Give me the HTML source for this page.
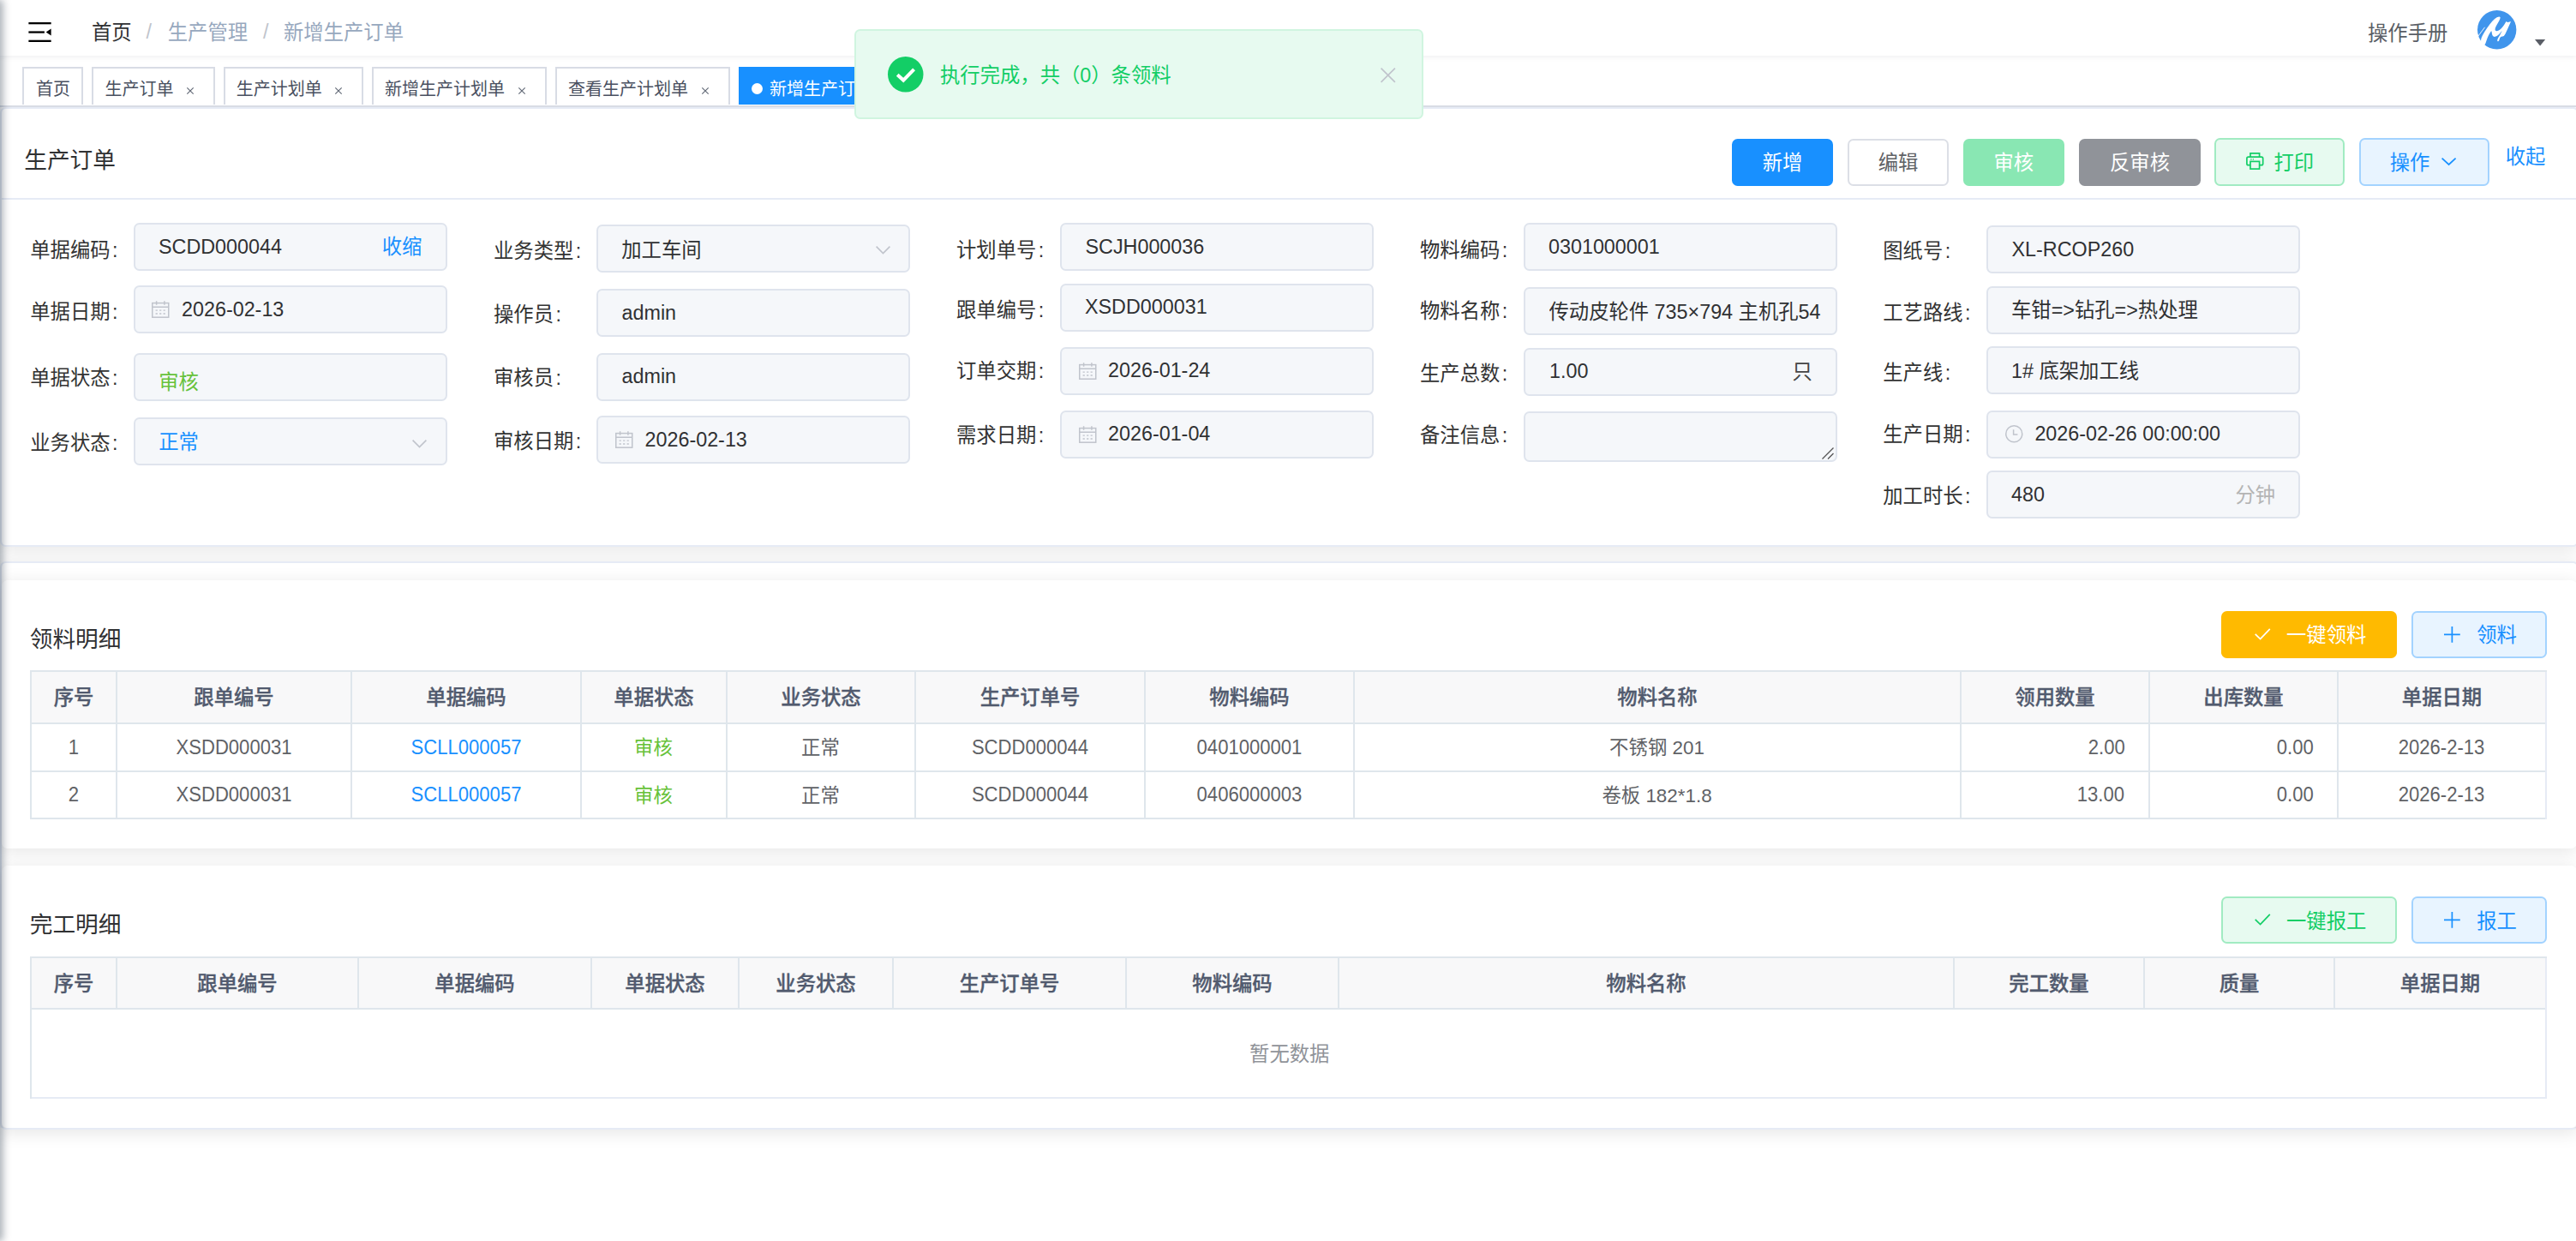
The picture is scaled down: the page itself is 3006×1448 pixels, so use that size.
<!DOCTYPE html>
<html lang="zh-CN"><head><meta charset="utf-8"><title>新增生产订单</title>
<style>
html,body{margin:0;padding:0}
body{width:3006px;height:1448px;position:relative;overflow:hidden;background:#fff;font-family:"Liberation Sans","Noto Sans CJK SC",sans-serif;color:#303133}
.t{position:absolute;white-space:nowrap}
.b{position:absolute;box-sizing:border-box}
.card{background:#fff;border:2px solid #e6ebf5;border-radius:6.67px;box-shadow:0 3.33px 20px rgba(0,0,0,.1)}
.icard{background:#fff;box-shadow:0 3.33px 20px rgba(0,0,0,.1);border-radius:6.67px}
.inp{background:#f5f7fa;border:2px solid #dfe4ed;border-radius:6.67px}
.btn{border-radius:6.67px}
.tag{border:2px solid #d8dce5;background:#fff}
svg{position:absolute;overflow:visible}
table{border-collapse:collapse}
</style></head><body>

<div class="b " style="left:0.00px;top:0.00px;width:3006.00px;height:65.00px;background:#fff;box-shadow:0 1.67px 6.67px rgba(0,21,41,.08);z-index:3"></div>
<div class="b" style="left:0;top:0;width:3006px;height:65px;z-index:4">
<svg style="left:32.75px;top:26px" width="27" height="23" viewBox="0 0 26.25 23"><rect x="0" y="0" width="26.25" height="2.3" fill="#000"/><rect x="0" y="10.4" width="18.5" height="2.3" fill="#000"/><rect x="0" y="20.7" width="26.25" height="2.3" fill="#000"/><path d="M20.3 11.6 L26.25 7.6 L26.25 15.6 Z" fill="#000"/></svg>
<div class="t " style="top:20.80px;font-size:23.33px;line-height:34.99px;color:#303133;left:107.00px;">首页</div>
<div class="t " style="top:19.80px;font-size:23.33px;line-height:34.99px;color:#c0c4cc;left:170.50px;font-family:'Liberation Sans',sans-serif;">/</div>
<div class="t " style="top:20.80px;font-size:23.33px;line-height:34.99px;color:#97a8be;left:195.75px;">生产管理</div>
<div class="t " style="top:19.80px;font-size:23.33px;line-height:34.99px;color:#c0c4cc;left:307.00px;">/</div>
<div class="t " style="top:20.80px;font-size:23.33px;line-height:34.99px;color:#97a8be;left:331.00px;">新增生产订单</div>
<div class="t " style="top:21.50px;font-size:23.33px;line-height:34.99px;color:#5a5e66;left:2763.00px;">操作手册</div>
<svg style="left:2890.7px;top:11.5px" width="45.4" height="45.4" viewBox="0 0 45.4 45.4"><circle cx="22.7" cy="22.7" r="22.7" fill="#4095ec"/><path d="M5.98 41.48 Q5.25 41.84 4.29 37.98 Q3.32 34.11 5.98 29.27 Q8.64 24.44 11.54 20.33 Q14.44 16.22 17.34 12.84 Q20.24 9.45 22.66 8.37 Q25.07 7.28 26.16 7.64 Q27.25 8.00 26.16 10.42 Q25.07 12.84 23.62 15.25 Q22.17 17.67 21.33 19.60 Q20.48 21.54 20.60 22.87 Q20.72 24.20 22.41 24.32 Q24.11 24.44 26.04 22.87 Q27.97 21.30 29.67 19.00 Q31.36 16.70 32.20 15.25 Q33.05 13.80 33.53 13.20 Q34.02 12.60 34.50 13.44 Q34.98 14.29 36.31 13.80 Q37.64 13.32 38.49 12.96 Q39.33 12.60 38.01 15.62 Q36.68 18.64 35.23 21.78 Q33.78 24.92 32.57 27.58 Q31.36 30.24 29.42 30.48 Q27.49 30.72 26.77 31.45 Q26.04 32.17 25.68 33.87 Q25.32 35.56 24.59 36.04 Q23.86 36.52 23.38 36.04 Q22.90 35.56 23.50 33.87 Q24.11 32.17 25.07 30.72 Q26.04 29.27 27.73 25.89 Q29.42 22.51 27.73 24.92 Q26.04 27.34 24.11 28.91 Q22.17 30.48 20.48 30.84 Q18.79 31.21 17.82 29.76 Q16.86 28.31 16.73 25.89 Q16.61 23.47 15.53 24.92 Q14.44 26.37 12.99 29.27 Q11.54 32.17 10.57 35.32 Q9.60 38.46 9.12 39.18 Q8.64 39.91 7.67 40.51 Q6.70 41.12 5.98 41.48 Z" fill="#fff"/><path d="M0.4 30.7 L8.6 19.8" stroke="#fff" stroke-width="0.9" fill="none"/></svg>
<svg style="left:2958.1px;top:46px" width="12.2" height="7.5" viewBox="0 0 12.2 7.5"><path d="M0 0 H12.2 L6.1 7.5 Z" fill="#5a5e66"/></svg>
</div>
<div class="b" style="left:0;top:65px;width:3006px;height:60px;background:#fff;border-bottom:2px solid #d8dce5;overflow:hidden;z-index:2">
<div class="b tag" style="left:26px;top:13px;width:71px;height:44px;border-bottom:none"></div>
<div class="b tag" style="left:107px;top:13px;width:144px;height:44px;border-bottom:none"></div>
<div class="b tag" style="left:261px;top:13px;width:163px;height:44px;border-bottom:none"></div>
<div class="b tag" style="left:434px;top:13px;width:204px;height:44px;border-bottom:none"></div>
<div class="b tag" style="left:648px;top:13px;width:204px;height:44px;border-bottom:none"></div>
<div class="b" style="left:862px;top:13px;width:194px;height:44px;background:#1890ff"></div>
</div>
<div class="b" style="left:0;top:65px;width:3006px;height:58px;z-index:2;overflow:hidden">
<div class="t " style="top:24.36px;font-size:20px;line-height:30.0px;color:#495060;left:42.00px;">首页</div>
<div class="t " style="top:24.36px;font-size:20px;line-height:30.0px;color:#495060;left:122.50px;">生产订单</div>
<svg style="left:218.25px;top:36.75px" width="8" height="8" viewBox="0 0 8 8"><path d="M0.3 0.3 L7.7 7.7 M7.7 0.3 L0.3 7.7" stroke="#646b78" stroke-width="1.2" fill="none"/></svg>
<div class="t " style="top:24.36px;font-size:20px;line-height:30.0px;color:#495060;left:275.75px;">生产计划单</div>
<svg style="left:391.25px;top:36.75px" width="8" height="8" viewBox="0 0 8 8"><path d="M0.3 0.3 L7.7 7.7 M7.7 0.3 L0.3 7.7" stroke="#646b78" stroke-width="1.2" fill="none"/></svg>
<div class="t " style="top:24.36px;font-size:20px;line-height:30.0px;color:#495060;left:449.00px;">新增生产计划单</div>
<svg style="left:605px;top:36.75px" width="8" height="8" viewBox="0 0 8 8"><path d="M0.3 0.3 L7.7 7.7 M7.7 0.3 L0.3 7.7" stroke="#646b78" stroke-width="1.2" fill="none"/></svg>
<div class="t " style="top:24.36px;font-size:20px;line-height:30.0px;color:#495060;left:663.00px;">查看生产计划单</div>
<svg style="left:819.2px;top:36.75px" width="8" height="8" viewBox="0 0 8 8"><path d="M0.3 0.3 L7.7 7.7 M7.7 0.3 L0.3 7.7" stroke="#646b78" stroke-width="1.2" fill="none"/></svg>
<div class="b" style="left:876.75px;top:31.6px;width:13.3px;height:13.3px;border-radius:50%;background:#fff"></div>
<div class="t " style="top:24.36px;font-size:20px;line-height:30.0px;color:#fff;left:898.00px;">新增生产订单</div>
<svg style="left:1033px;top:36.75px" width="8" height="8" viewBox="0 0 8 8"><path d="M0.3 0.3 L7.7 7.7 M7.7 0.3 L0.3 7.7" stroke="#fff" stroke-width="1.2" fill="none"/></svg>
</div>
<div class="b " style="left:997.00px;top:34.30px;width:664.00px;height:105.00px;background:#e7faf0;border:2px solid #d0f5e0;border-radius:6.67px;z-index:10"></div>
<svg style="left:1035.5px;top:66.25px;z-index:11" width="41.5" height="41.5" viewBox="0 0 41.5 41.5"><circle cx="20.75" cy="20.75" r="20.75" fill="#13ce66"/><path d="M11.2 21.3 L18.2 27.6 L30.6 14.8" stroke="#fff" stroke-width="4" fill="none"/></svg>
<div class="t " style="top:70.90px;font-size:23.33px;line-height:34.99px;color:#13ce66;left:1097.00px;z-index:11;">执行完成，共（0）条领料</div>
<svg style="left:1610.5px;top:78.5px;z-index:11" width="17.5" height="17.5" viewBox="0 0 17.5 17.5"><path d="M0.6 0.6 L16.9 16.9 M16.9 0.6 L0.6 16.9" stroke="#c0c4cc" stroke-width="1.7" fill="none"/></svg>
<div class="b card" style="left:0.00px;top:125.00px;width:3009.00px;height:513.00px;"></div>
<div class="t " style="top:166.98px;font-size:26.67px;line-height:40.01px;color:#303133;left:28.25px;">生产订单</div>
<div class="b " style="left:0.00px;top:231.00px;width:3006.00px;height:2.00px;background:#e6ebf5"></div>
<div class="b btn" style="left:2021.00px;top:162.00px;width:118.00px;height:55.00px;background:#1890ff"></div>
<div class="t " style="top:173.31px;font-size:23.33px;line-height:34.99px;color:#fff;left:1680.00px;width:800px;text-align:center;">新增</div>
<div class="b btn" style="left:2156.00px;top:162.00px;width:118.00px;height:55.00px;background:#fff;border:2px solid #dcdfe6"></div>
<div class="t " style="top:173.31px;font-size:23.33px;line-height:34.99px;color:#606266;left:1815.00px;width:800px;text-align:center;">编辑</div>
<div class="b btn" style="left:2291.00px;top:162.00px;width:118.00px;height:55.00px;background:#89e7b3"></div>
<div class="t " style="top:173.31px;font-size:23.33px;line-height:34.99px;color:#fff;left:1949.75px;width:800px;text-align:center;">审核</div>
<div class="b btn" style="left:2426.00px;top:162.00px;width:142.00px;height:55.00px;background:#909399"></div>
<div class="t " style="top:173.31px;font-size:23.33px;line-height:34.99px;color:#fff;left:2097.00px;width:800px;text-align:center;">反审核</div>
<div class="b btn" style="left:2584.00px;top:161.00px;width:152.00px;height:56.00px;background:#e7faf0;border:2px solid #a1ebc2"></div>
<div class="t " style="top:172.50px;font-size:23.33px;line-height:34.99px;color:#13ce66;left:2653.50px;">打印</div>
<svg style="left:2621.1px;top:178.4px" width="20.6" height="20" viewBox="0 0 20.6 20" fill="none" stroke="#13ce66" stroke-width="1.7"><path d="M5 5.2 V0.9 H15.6 V5.2"/><path d="M5 14.6 H2.6 Q0.9 14.6 0.9 12.9 V7 Q0.9 5.2 2.6 5.2 H18 Q19.7 5.2 19.7 7 V12.9 Q19.7 14.6 18 14.6 H15.6"/><rect x="5" y="10.4" width="10.6" height="8.7"/><path d="M5.2 7.9 H6.6 M7.8 7.9 H9" stroke-width="1.4"/></svg>
<div class="b btn" style="left:2753.00px;top:161.00px;width:152.00px;height:56.00px;background:#e8f4ff;border:2px solid #a3d3ff"></div>
<div class="t " style="top:172.50px;font-size:23.33px;line-height:34.99px;color:#1890ff;left:2788.70px;">操作</div>
<svg style="left:2848.8px;top:184.1px" width="17.2" height="8.7" viewBox="0 0 17.2 8.7"><path d="M0.6 0.6 L8.6 8 L16.6 0.6" stroke="#1890ff" stroke-width="1.7" fill="none"/></svg>
<div class="t " style="top:166.41px;font-size:23.33px;line-height:34.99px;color:#1890ff;left:2923.80px;">收起</div>
<div class="b inp" style="left:156.00px;top:260.00px;width:366.00px;height:56.00px;"></div>
<div class="t " style="top:275.06px;font-size:23.33px;line-height:34.99px;color:#333;left:35.25px;">单据编码<span style="margin-left:2.5px">:</span></div>
<div class="t " style="top:271.00px;font-size:23.33px;line-height:34.99px;color:#303133;left:185.00px;">SCDD000044</div>
<div class="t " style="top:271.31px;font-size:23.33px;line-height:34.99px;color:#1890ff;left:445.75px;">收缩</div>
<div class="b inp" style="left:156.00px;top:333.00px;width:366.00px;height:56.00px;"></div>
<div class="t " style="top:346.81px;font-size:23.33px;line-height:34.99px;color:#333;left:35.25px;">单据日期<span style="margin-left:2.5px">:</span></div>
<svg style="left:177px;top:351.3px" width="20.5" height="20" viewBox="0 0 20.5 20" fill="none" stroke="#c0c4cc" stroke-width="1.5"><rect x="0.75" y="2.6" width="19" height="16.6"/><path d="M0.75 7.3 H19.75 M5.6 0.3 V4.8 M14.9 0.3 V4.8"/><path d="M4.6 11.2 H6.8 M9.1 11.2 H11.3 M13.6 11.2 H15.8 M4.6 15 H6.8 M9.1 15 H11.3 M13.6 15 H15.8" stroke-width="1.3"/></svg>
<div class="t " style="top:344.11px;font-size:23.33px;line-height:34.99px;color:#303133;left:212.00px;">2026-02-13</div>
<div class="b inp" style="left:156.00px;top:412.00px;width:366.00px;height:56.00px;"></div>
<div class="t " style="top:423.81px;font-size:23.33px;line-height:34.99px;color:#333;left:35.25px;">单据状态<span style="margin-left:2.5px">:</span></div>
<div class="t " style="top:428.81px;font-size:23.33px;line-height:34.99px;color:#67c23a;left:185.25px;">审核</div>
<div class="b inp" style="left:156.00px;top:487.00px;width:366.00px;height:56.00px;"></div>
<div class="t " style="top:499.80px;font-size:23.33px;line-height:34.99px;color:#333;left:35.25px;">业务状态<span style="margin-left:2.5px">:</span></div>
<div class="t " style="top:499.30px;font-size:23.33px;line-height:34.99px;color:#1890ff;left:185.25px;">正常</div>
<svg style="left:481.25px;top:512.5px" width="17" height="9.5" viewBox="0 0 17 9.5"><path d="M0.6 0.6 L8.5 8.6 L16.4 0.6" stroke="#c0c4cc" stroke-width="1.6" fill="none"/></svg>
<div class="b inp" style="left:696.00px;top:262.00px;width:366.00px;height:56.00px;"></div>
<div class="t " style="top:275.56px;font-size:23.33px;line-height:34.99px;color:#333;left:576.00px;">业务类型<span style="margin-left:2.5px">:</span></div>
<div class="t " style="top:274.81px;font-size:23.33px;line-height:34.99px;color:#303133;left:725.25px;">加工车间</div>
<svg style="left:1021.7px;top:287.3px" width="17" height="9.5" viewBox="0 0 17 9.5"><path d="M0.6 0.6 L8.5 8.6 L16.4 0.6" stroke="#c0c4cc" stroke-width="1.6" fill="none"/></svg>
<div class="b inp" style="left:696.00px;top:337.00px;width:366.00px;height:56.00px;"></div>
<div class="t " style="top:349.56px;font-size:23.33px;line-height:34.99px;color:#333;left:576.00px;">操作员<span style="margin-left:2.5px">:</span></div>
<div class="t " style="top:348.20px;font-size:23.33px;line-height:34.99px;color:#303133;left:725.50px;">admin</div>
<div class="b inp" style="left:696.00px;top:412.00px;width:366.00px;height:56.00px;"></div>
<div class="t " style="top:423.81px;font-size:23.33px;line-height:34.99px;color:#333;left:576.00px;">审核员<span style="margin-left:2.5px">:</span></div>
<div class="t " style="top:422.31px;font-size:23.33px;line-height:34.99px;color:#303133;left:725.50px;">admin</div>
<div class="b inp" style="left:696.00px;top:485.00px;width:366.00px;height:56.00px;"></div>
<div class="t " style="top:497.55px;font-size:23.33px;line-height:34.99px;color:#333;left:576.00px;">审核日期<span style="margin-left:2.5px">:</span></div>
<svg style="left:718px;top:503px" width="20.5" height="20" viewBox="0 0 20.5 20" fill="none" stroke="#c0c4cc" stroke-width="1.5"><rect x="0.75" y="2.6" width="19" height="16.6"/><path d="M0.75 7.3 H19.75 M5.6 0.3 V4.8 M14.9 0.3 V4.8"/><path d="M4.6 11.2 H6.8 M9.1 11.2 H11.3 M13.6 11.2 H15.8 M4.6 15 H6.8 M9.1 15 H11.3 M13.6 15 H15.8" stroke-width="1.3"/></svg>
<div class="t " style="top:495.80px;font-size:23.33px;line-height:34.99px;color:#303133;left:752.50px;">2026-02-13</div>
<div class="b inp" style="left:1237.00px;top:260.00px;width:366.00px;height:56.00px;"></div>
<div class="t " style="top:275.06px;font-size:23.33px;line-height:34.99px;color:#333;left:1116.00px;">计划单号<span style="margin-left:2.5px">:</span></div>
<div class="t " style="top:271.00px;font-size:23.33px;line-height:34.99px;color:#303133;left:1266.50px;">SCJH000036</div>
<div class="b inp" style="left:1237.00px;top:331.00px;width:366.00px;height:56.00px;"></div>
<div class="t " style="top:345.06px;font-size:23.33px;line-height:34.99px;color:#333;left:1116.00px;">跟单编号<span style="margin-left:2.5px">:</span></div>
<div class="t " style="top:341.41px;font-size:23.33px;line-height:34.99px;color:#303133;left:1266.00px;">XSDD000031</div>
<div class="b inp" style="left:1237.00px;top:405.00px;width:366.00px;height:56.00px;"></div>
<div class="t " style="top:416.31px;font-size:23.33px;line-height:34.99px;color:#333;left:1116.00px;">订单交期<span style="margin-left:2.5px">:</span></div>
<svg style="left:1258.5px;top:422.5px" width="20.5" height="20" viewBox="0 0 20.5 20" fill="none" stroke="#c0c4cc" stroke-width="1.5"><rect x="0.75" y="2.6" width="19" height="16.6"/><path d="M0.75 7.3 H19.75 M5.6 0.3 V4.8 M14.9 0.3 V4.8"/><path d="M4.6 11.2 H6.8 M9.1 11.2 H11.3 M13.6 11.2 H15.8 M4.6 15 H6.8 M9.1 15 H11.3 M13.6 15 H15.8" stroke-width="1.3"/></svg>
<div class="t " style="top:415.31px;font-size:23.33px;line-height:34.99px;color:#303133;left:1293.00px;">2026-01-24</div>
<div class="b inp" style="left:1237.00px;top:479.00px;width:366.00px;height:56.00px;"></div>
<div class="t " style="top:490.81px;font-size:23.33px;line-height:34.99px;color:#333;left:1116.00px;">需求日期<span style="margin-left:2.5px">:</span></div>
<svg style="left:1258.5px;top:496.5px" width="20.5" height="20" viewBox="0 0 20.5 20" fill="none" stroke="#c0c4cc" stroke-width="1.5"><rect x="0.75" y="2.6" width="19" height="16.6"/><path d="M0.75 7.3 H19.75 M5.6 0.3 V4.8 M14.9 0.3 V4.8"/><path d="M4.6 11.2 H6.8 M9.1 11.2 H11.3 M13.6 11.2 H15.8 M4.6 15 H6.8 M9.1 15 H11.3 M13.6 15 H15.8" stroke-width="1.3"/></svg>
<div class="t " style="top:489.31px;font-size:23.33px;line-height:34.99px;color:#303133;left:1293.00px;">2026-01-04</div>
<div class="b inp" style="left:1778.00px;top:260.00px;width:366.00px;height:56.00px;"></div>
<div class="t " style="top:274.56px;font-size:23.33px;line-height:34.99px;color:#333;left:1657.00px;">物料编码<span style="margin-left:2.5px">:</span></div>
<div class="t " style="top:271.00px;font-size:23.33px;line-height:34.99px;color:#303133;left:1807.00px;">0301000001</div>
<div class="b inp" style="left:1778.00px;top:335.00px;width:366.00px;height:56.00px;"></div>
<div class="t " style="top:345.56px;font-size:23.33px;line-height:34.99px;color:#333;left:1657.00px;">物料名称<span style="margin-left:2.5px">:</span></div>
<div class="t" style="left:1807.5px;top:346.5px;width:318px;overflow:hidden;font-size:23.33px;line-height:35px;color:#303133">传动皮轮件 735×794 主机孔54</div>
<div class="b inp" style="left:1778.00px;top:406.00px;width:366.00px;height:56.00px;"></div>
<div class="t " style="top:419.31px;font-size:23.33px;line-height:34.99px;color:#333;left:1657.00px;">生产总数<span style="margin-left:2.5px">:</span></div>
<div class="t " style="top:416.11px;font-size:23.33px;line-height:34.99px;color:#303133;left:1808.00px;">1.00</div>
<div class="t " style="top:416.81px;font-size:23.33px;line-height:34.99px;color:#444;left:2091.50px;">只</div>
<div class="b inp" style="left:1778.00px;top:480.00px;width:366.00px;height:59.00px;"></div>
<div class="t " style="top:491.31px;font-size:23.33px;line-height:34.99px;color:#333;left:1657.00px;">备注信息<span style="margin-left:2.5px">:</span></div>
<svg style="left:2126px;top:521.5px" width="14" height="14" viewBox="0 0 14 14"><path d="M0.5 13.5 L13.5 0.5 M7 13.5 L13.5 7" stroke="#555" stroke-width="1.3" fill="none"/></svg>
<div class="b inp" style="left:2318.00px;top:263.00px;width:366.00px;height:56.00px;"></div>
<div class="t " style="top:275.81px;font-size:23.33px;line-height:34.99px;color:#333;left:2197.30px;">图纸号<span style="margin-left:2.5px">:</span></div>
<div class="t " style="top:273.81px;font-size:23.33px;line-height:34.99px;color:#303133;left:2347.50px;">XL-RCOP260</div>
<div class="b inp" style="left:2318.00px;top:334.00px;width:366.00px;height:56.00px;"></div>
<div class="t " style="top:347.81px;font-size:23.33px;line-height:34.99px;color:#333;left:2197.30px;">工艺路线<span style="margin-left:2.5px">:</span></div>
<div class="t " style="top:345.31px;font-size:23.33px;line-height:34.99px;color:#303133;left:2347.00px;">车钳=&gt;钻孔=&gt;热处理</div>
<div class="b inp" style="left:2318.00px;top:404.00px;width:366.00px;height:56.00px;"></div>
<div class="t " style="top:418.31px;font-size:23.33px;line-height:34.99px;color:#333;left:2197.30px;">生产线<span style="margin-left:2.5px">:</span></div>
<div class="t " style="top:416.31px;font-size:23.33px;line-height:34.99px;color:#303133;left:2347.00px;">1# 底架加工线</div>
<div class="b inp" style="left:2318.00px;top:479.00px;width:366.00px;height:56.00px;"></div>
<div class="t " style="top:490.20px;font-size:23.33px;line-height:34.99px;color:#333;left:2197.30px;">生产日期<span style="margin-left:2.5px">:</span></div>
<svg style="left:2339.8px;top:496.15px" width="20.5" height="20.5" viewBox="0 0 20.5 20.5" fill="none" stroke="#c0c4cc" stroke-width="1.5"><circle cx="10.25" cy="10.25" r="9.5"/><path d="M9.6 5.2 V11 H14.4"/></svg>
<div class="t " style="top:488.81px;font-size:23.33px;line-height:34.99px;color:#303133;left:2374.40px;">2026-02-26 00:00:00</div>
<div class="b inp" style="left:2318.00px;top:549.00px;width:366.00px;height:56.00px;"></div>
<div class="t " style="top:562.20px;font-size:23.33px;line-height:34.99px;color:#333;left:2197.30px;">加工时长<span style="margin-left:2.5px">:</span></div>
<div class="t " style="top:559.80px;font-size:23.33px;line-height:34.99px;color:#303133;left:2347.00px;">480</div>
<div class="t " style="top:560.80px;font-size:23.33px;line-height:34.99px;color:#b4b4b4;left:2608.50px;">分钟</div>
<div class="b card" style="left:0.00px;top:655.00px;width:3009.00px;height:663.00px;"></div>
<div class="b icard" style="left:2.00px;top:677.00px;width:3005.00px;height:313.00px;"></div>
<div class="b icard" style="left:2.00px;top:1010.00px;width:3005.00px;height:306.00px;clip-path:inset(-40px -40px 0px -40px);"></div>
<div class="t " style="top:725.98px;font-size:26.67px;line-height:40.01px;color:#303133;left:34.75px;">领料明细</div>
<div class="b btn" style="left:2592.00px;top:713.00px;width:205.00px;height:55.00px;background:#ffba00"></div>
<div class="t " style="top:724.30px;font-size:23.33px;line-height:34.99px;color:#fff;left:2668.00px;">一键领料</div>
<svg style="left:2630.7px;top:733px" width="18.5" height="13.5" viewBox="0 0 18.5 13.5"><path d="M0.7 6.8 L6.6 12.5 L17.8 0.8" stroke="#fff" stroke-width="1.7" fill="none"/></svg>
<div class="b btn" style="left:2814.00px;top:713.00px;width:158.00px;height:55.00px;background:#e8f4ff;border:2px solid #a3d3ff"></div>
<div class="t " style="top:724.30px;font-size:23.33px;line-height:34.99px;color:#1890ff;left:2890.20px;">领料</div>
<svg style="left:2851.9px;top:731px" width="18.8" height="18.8" viewBox="0 0 18.8 18.8"><path d="M9.4 0 V18.8 M0 9.4 H18.8" stroke="#1890ff" stroke-width="1.7" fill="none"/></svg>
<div class="b " style="left:35.00px;top:782.00px;width:2937.00px;height:61.00px;background:#f8f8f9"></div>
<div class="b " style="left:35.00px;top:782.00px;width:2937.00px;height:2.00px;background:#dfe6ec"></div>
<div class="b " style="left:35.00px;top:843.00px;width:2937.00px;height:2.00px;background:#dfe6ec"></div>
<div class="b " style="left:35.00px;top:899.00px;width:2937.00px;height:2.00px;background:#dfe6ec"></div>
<div class="b " style="left:35.00px;top:954.00px;width:2937.00px;height:2.00px;background:#dfe6ec"></div>
<div class="b " style="left:35.00px;top:782.00px;width:2.00px;height:174.00px;background:#dfe6ec"></div>
<div class="b " style="left:2970.00px;top:784.00px;width:2.00px;height:172.00px;background:#e6ebf5"></div>
<div class="b " style="left:135.00px;top:784.00px;width:2.00px;height:170.00px;background:#dfe6ec"></div>
<div class="b " style="left:409.00px;top:784.00px;width:2.00px;height:170.00px;background:#dfe6ec"></div>
<div class="b " style="left:677.00px;top:784.00px;width:2.00px;height:170.00px;background:#dfe6ec"></div>
<div class="b " style="left:847.00px;top:784.00px;width:2.00px;height:170.00px;background:#dfe6ec"></div>
<div class="b " style="left:1067.00px;top:784.00px;width:2.00px;height:170.00px;background:#dfe6ec"></div>
<div class="b " style="left:1335.00px;top:784.00px;width:2.00px;height:170.00px;background:#dfe6ec"></div>
<div class="b " style="left:1579.00px;top:784.00px;width:2.00px;height:170.00px;background:#dfe6ec"></div>
<div class="b " style="left:2287.00px;top:784.00px;width:2.00px;height:170.00px;background:#dfe6ec"></div>
<div class="b " style="left:2507.00px;top:784.00px;width:2.00px;height:170.00px;background:#dfe6ec"></div>
<div class="b " style="left:2727.00px;top:784.00px;width:2.00px;height:170.00px;background:#dfe6ec"></div>
<div class="t " style="top:797.30px;font-size:23.33px;line-height:34.99px;color:#515a6e;font-weight:500;left:-314.00px;width:800px;text-align:center;-webkit-text-stroke:0.35px #515a6e;">序号</div>
<div class="t " style="top:797.30px;font-size:23.33px;line-height:34.99px;color:#515a6e;font-weight:500;left:-127.00px;width:800px;text-align:center;-webkit-text-stroke:0.35px #515a6e;">跟单编号</div>
<div class="t " style="top:797.30px;font-size:23.33px;line-height:34.99px;color:#515a6e;font-weight:500;left:144.00px;width:800px;text-align:center;-webkit-text-stroke:0.35px #515a6e;">单据编码</div>
<div class="t " style="top:797.30px;font-size:23.33px;line-height:34.99px;color:#515a6e;font-weight:500;left:363.00px;width:800px;text-align:center;-webkit-text-stroke:0.35px #515a6e;">单据状态</div>
<div class="t " style="top:797.30px;font-size:23.33px;line-height:34.99px;color:#515a6e;font-weight:500;left:558.00px;width:800px;text-align:center;-webkit-text-stroke:0.35px #515a6e;">业务状态</div>
<div class="t " style="top:797.30px;font-size:23.33px;line-height:34.99px;color:#515a6e;font-weight:500;left:802.00px;width:800px;text-align:center;-webkit-text-stroke:0.35px #515a6e;">生产订单号</div>
<div class="t " style="top:797.30px;font-size:23.33px;line-height:34.99px;color:#515a6e;font-weight:500;left:1058.00px;width:800px;text-align:center;-webkit-text-stroke:0.35px #515a6e;">物料编码</div>
<div class="t " style="top:797.30px;font-size:23.33px;line-height:34.99px;color:#515a6e;font-weight:500;left:1534.00px;width:800px;text-align:center;-webkit-text-stroke:0.35px #515a6e;">物料名称</div>
<div class="t " style="top:797.30px;font-size:23.33px;line-height:34.99px;color:#515a6e;font-weight:500;left:1998.00px;width:800px;text-align:center;-webkit-text-stroke:0.35px #515a6e;">领用数量</div>
<div class="t " style="top:797.30px;font-size:23.33px;line-height:34.99px;color:#515a6e;font-weight:500;left:2218.00px;width:800px;text-align:center;-webkit-text-stroke:0.35px #515a6e;">出库数量</div>
<div class="t " style="top:797.30px;font-size:23.33px;line-height:34.99px;color:#515a6e;font-weight:500;left:2449.50px;width:800px;text-align:center;-webkit-text-stroke:0.35px #515a6e;">单据日期</div>
<div class="t " style="top:853.50px;font-size:24px;line-height:36.0px;color:#606266;left:-314.50px;width:800px;text-align:center;transform:scaleX(.92);">1</div>
<div class="t " style="top:853.50px;font-size:24px;line-height:36.0px;color:#606266;left:-127.50px;width:800px;text-align:center;transform:scaleX(.92);">XSDD000031</div>
<div class="t " style="top:853.50px;font-size:24px;line-height:36.0px;color:#1890ff;left:143.50px;width:800px;text-align:center;transform:scaleX(.92);">SCLL000057</div>
<div class="t " style="top:856.45px;font-size:22.4px;line-height:33.6px;color:#67c23a;left:362.50px;width:800px;text-align:center;">审核</div>
<div class="t " style="top:856.45px;font-size:22.4px;line-height:33.6px;color:#606266;left:557.50px;width:800px;text-align:center;">正常</div>
<div class="t " style="top:853.50px;font-size:24px;line-height:36.0px;color:#606266;left:801.50px;width:800px;text-align:center;transform:scaleX(.92);">SCDD000044</div>
<div class="t " style="top:853.50px;font-size:24px;line-height:36.0px;color:#606266;left:1057.50px;width:800px;text-align:center;transform:scaleX(.92);">0401000001</div>
<div class="t " style="top:856.45px;font-size:22.4px;line-height:33.6px;color:#606266;left:1533.50px;width:800px;text-align:center;">不锈钢 201</div>
<div class="t " style="top:853.50px;font-size:24px;line-height:36.0px;color:#606266;right:526.60px;transform:scaleX(.92);transform-origin:100% 50%;">2.00</div>
<div class="t " style="top:853.50px;font-size:24px;line-height:36.0px;color:#606266;right:306.60px;transform:scaleX(.92);transform-origin:100% 50%;">0.00</div>
<div class="t " style="top:853.50px;font-size:24px;line-height:36.0px;color:#606266;left:2449.00px;width:800px;text-align:center;transform:scaleX(.92);">2026-2-13</div>
<div class="t " style="top:909.00px;font-size:24px;line-height:36.0px;color:#606266;left:-314.50px;width:800px;text-align:center;transform:scaleX(.92);">2</div>
<div class="t " style="top:909.00px;font-size:24px;line-height:36.0px;color:#606266;left:-127.50px;width:800px;text-align:center;transform:scaleX(.92);">XSDD000031</div>
<div class="t " style="top:909.00px;font-size:24px;line-height:36.0px;color:#1890ff;left:143.50px;width:800px;text-align:center;transform:scaleX(.92);">SCLL000057</div>
<div class="t " style="top:911.95px;font-size:22.4px;line-height:33.6px;color:#67c23a;left:362.50px;width:800px;text-align:center;">审核</div>
<div class="t " style="top:911.95px;font-size:22.4px;line-height:33.6px;color:#606266;left:557.50px;width:800px;text-align:center;">正常</div>
<div class="t " style="top:909.00px;font-size:24px;line-height:36.0px;color:#606266;left:801.50px;width:800px;text-align:center;transform:scaleX(.92);">SCDD000044</div>
<div class="t " style="top:909.00px;font-size:24px;line-height:36.0px;color:#606266;left:1057.50px;width:800px;text-align:center;transform:scaleX(.92);">0406000003</div>
<div class="t " style="top:911.95px;font-size:22.4px;line-height:33.6px;color:#606266;left:1533.50px;width:800px;text-align:center;">卷板 182*1.8</div>
<div class="t " style="top:909.00px;font-size:24px;line-height:36.0px;color:#606266;right:526.60px;transform:scaleX(.92);transform-origin:100% 50%;">13.00</div>
<div class="t " style="top:909.00px;font-size:24px;line-height:36.0px;color:#606266;right:306.60px;transform:scaleX(.92);transform-origin:100% 50%;">0.00</div>
<div class="t " style="top:909.00px;font-size:24px;line-height:36.0px;color:#606266;left:2449.00px;width:800px;text-align:center;transform:scaleX(.92);">2026-2-13</div>
<div class="t " style="top:1058.98px;font-size:26.67px;line-height:40.01px;color:#303133;left:34.75px;">完工明细</div>
<div class="b btn" style="left:2592.00px;top:1046.00px;width:205.00px;height:55.00px;background:#e7faf0;border:2px solid #a1ebc2"></div>
<div class="t " style="top:1057.51px;font-size:23.33px;line-height:34.99px;color:#13ce66;left:2668.00px;">一键报工</div>
<svg style="left:2630.7px;top:1066.2px" width="18.5" height="13.5" viewBox="0 0 18.5 13.5"><path d="M0.7 6.8 L6.6 12.5 L17.8 0.8" stroke="#13ce66" stroke-width="1.7" fill="none"/></svg>
<div class="b btn" style="left:2814.00px;top:1046.00px;width:158.00px;height:55.00px;background:#e8f4ff;border:2px solid #a3d3ff"></div>
<div class="t " style="top:1057.51px;font-size:23.33px;line-height:34.99px;color:#1890ff;left:2890.20px;">报工</div>
<svg style="left:2851.9px;top:1064.2px" width="18.8" height="18.8" viewBox="0 0 18.8 18.8"><path d="M9.4 0 V18.8 M0 9.4 H18.8" stroke="#1890ff" stroke-width="1.7" fill="none"/></svg>
<div class="b " style="left:35.00px;top:1116.00px;width:2937.00px;height:60.00px;background:#f8f8f9"></div>
<div class="b " style="left:35.00px;top:1116.00px;width:2937.00px;height:2.00px;background:#dfe6ec"></div>
<div class="b " style="left:35.00px;top:1176.00px;width:2937.00px;height:2.00px;background:#dfe6ec"></div>
<div class="b " style="left:35.00px;top:1280.00px;width:2937.00px;height:2.00px;background:#e6ebf5"></div>
<div class="b " style="left:35.00px;top:1116.00px;width:2.00px;height:166.00px;background:#dfe6ec"></div>
<div class="b " style="left:2970.00px;top:1118.00px;width:2.00px;height:164.00px;background:#e6ebf5"></div>
<div class="b " style="left:135.00px;top:1118.00px;width:2.00px;height:58.00px;background:#dfe6ec"></div>
<div class="b " style="left:417.00px;top:1118.00px;width:2.00px;height:58.00px;background:#dfe6ec"></div>
<div class="b " style="left:689.00px;top:1118.00px;width:2.00px;height:58.00px;background:#dfe6ec"></div>
<div class="b " style="left:861.00px;top:1118.00px;width:2.00px;height:58.00px;background:#dfe6ec"></div>
<div class="b " style="left:1041.00px;top:1118.00px;width:2.00px;height:58.00px;background:#dfe6ec"></div>
<div class="b " style="left:1313.00px;top:1118.00px;width:2.00px;height:58.00px;background:#dfe6ec"></div>
<div class="b " style="left:1561.00px;top:1118.00px;width:2.00px;height:58.00px;background:#dfe6ec"></div>
<div class="b " style="left:2279.00px;top:1118.00px;width:2.00px;height:58.00px;background:#dfe6ec"></div>
<div class="b " style="left:2501.00px;top:1118.00px;width:2.00px;height:58.00px;background:#dfe6ec"></div>
<div class="b " style="left:2723.00px;top:1118.00px;width:2.00px;height:58.00px;background:#dfe6ec"></div>
<div class="t " style="top:1130.81px;font-size:23.33px;line-height:34.99px;color:#515a6e;font-weight:500;left:-314.00px;width:800px;text-align:center;-webkit-text-stroke:0.35px #515a6e;">序号</div>
<div class="t " style="top:1130.81px;font-size:23.33px;line-height:34.99px;color:#515a6e;font-weight:500;left:-123.00px;width:800px;text-align:center;-webkit-text-stroke:0.35px #515a6e;">跟单编号</div>
<div class="t " style="top:1130.81px;font-size:23.33px;line-height:34.99px;color:#515a6e;font-weight:500;left:154.00px;width:800px;text-align:center;-webkit-text-stroke:0.35px #515a6e;">单据编码</div>
<div class="t " style="top:1130.81px;font-size:23.33px;line-height:34.99px;color:#515a6e;font-weight:500;left:376.00px;width:800px;text-align:center;-webkit-text-stroke:0.35px #515a6e;">单据状态</div>
<div class="t " style="top:1130.81px;font-size:23.33px;line-height:34.99px;color:#515a6e;font-weight:500;left:552.00px;width:800px;text-align:center;-webkit-text-stroke:0.35px #515a6e;">业务状态</div>
<div class="t " style="top:1130.81px;font-size:23.33px;line-height:34.99px;color:#515a6e;font-weight:500;left:778.00px;width:800px;text-align:center;-webkit-text-stroke:0.35px #515a6e;">生产订单号</div>
<div class="t " style="top:1130.81px;font-size:23.33px;line-height:34.99px;color:#515a6e;font-weight:500;left:1038.00px;width:800px;text-align:center;-webkit-text-stroke:0.35px #515a6e;">物料编码</div>
<div class="t " style="top:1130.81px;font-size:23.33px;line-height:34.99px;color:#515a6e;font-weight:500;left:1521.00px;width:800px;text-align:center;-webkit-text-stroke:0.35px #515a6e;">物料名称</div>
<div class="t " style="top:1130.81px;font-size:23.33px;line-height:34.99px;color:#515a6e;font-weight:500;left:1991.00px;width:800px;text-align:center;-webkit-text-stroke:0.35px #515a6e;">完工数量</div>
<div class="t " style="top:1130.81px;font-size:23.33px;line-height:34.99px;color:#515a6e;font-weight:500;left:2213.00px;width:800px;text-align:center;-webkit-text-stroke:0.35px #515a6e;">质量</div>
<div class="t " style="top:1130.81px;font-size:23.33px;line-height:34.99px;color:#515a6e;font-weight:500;left:2447.50px;width:800px;text-align:center;-webkit-text-stroke:0.35px #515a6e;">单据日期</div>
<div class="t " style="top:1213.31px;font-size:23.33px;line-height:34.99px;color:#909399;left:1104.75px;width:800px;text-align:center;">暂无数据</div>
<div class="b" style="left:-30px;top:0;width:30px;height:1448px;box-shadow:3.3px 0 10px rgba(0,21,41,.35);z-index:20"></div>
</body></html>
